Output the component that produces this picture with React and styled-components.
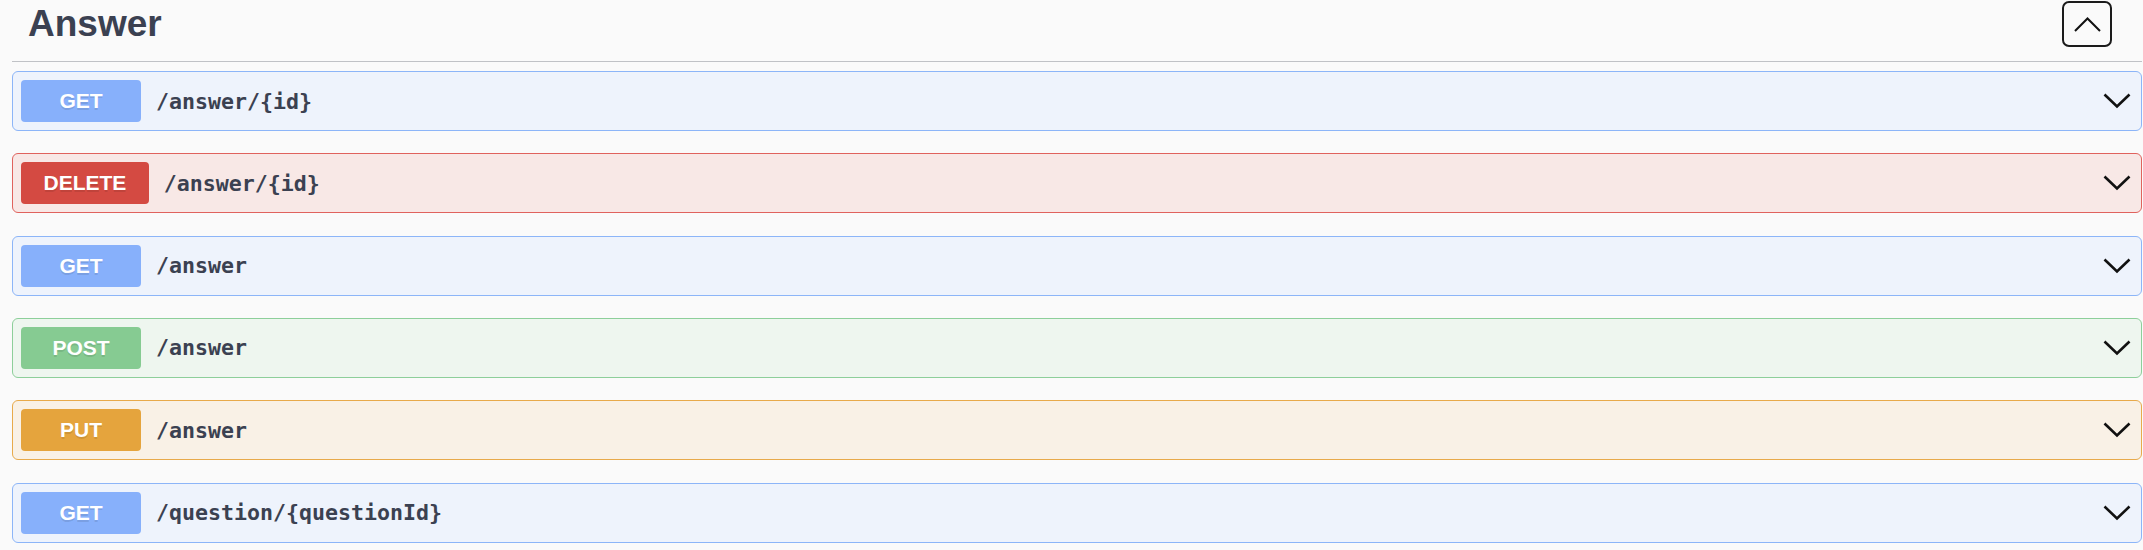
import React from "react";
import styled, { createGlobalStyle } from "styled-components";

const GlobalStyle = createGlobalStyle`
  html, body {
    margin: 0;
    padding: 0;
    background: #fafafa;
    font-family: "Liberation Sans", Arial, sans-serif;
  }
`;

const METHODS = {
  GET: { badge: "#87b0fb", bg: "#eef3fc", border: "#8cb5f8" },
  DELETE: { badge: "#d44a42", bg: "#f8e8e6", border: "#e0625d" },
  POST: { badge: "#86cb92", bg: "#eef6ef", border: "#8dcf9a" },
  PUT: { badge: "#e5a43d", bg: "#f9f1e6", border: "#e8aa4b" },
};

const Section = styled.section`
  padding: 0 1px 0 12px;
`;

const TagHeader = styled.div`
  display: flex;
  align-items: center;
  padding: 1px 30px 14px 16px;
  border-bottom: 1px solid rgba(59, 65, 81, 0.3);
  margin-bottom: 9px;
`;

const TagTitle = styled.h3`
  flex: 1;
  margin: 0;
  font-family: "Liberation Sans", Arial, sans-serif;
  font-size: 37px;
  font-weight: 700;
  color: #3b4151;
  line-height: 1.15;
`;

const CollapseButton = styled.button`
  width: 50px;
  height: 46px;
  box-sizing: border-box;
  border: 2px solid #1b1b1b;
  border-radius: 7px;
  background: transparent;
  padding: 0;
  display: flex;
  align-items: center;
  justify-content: center;
  cursor: pointer;
`;

const OpList = styled.div`
  display: flex;
  flex-direction: column;
  gap: 22.33px;
`;

const OpBlock = styled.div`
  box-sizing: border-box;
  border: 1px solid ${(p) => METHODS[p.$method].border};
  background: ${(p) => METHODS[p.$method].bg};
  border-radius: 6px;
`;

const Summary = styled.div`
  display: flex;
  align-items: center;
  padding: 8px;
`;

const MethodBadge = styled.span`
  flex: none;
  box-sizing: border-box;
  min-width: 120px;
  height: 42px;
  padding: 0 22.5px;
  display: flex;
  align-items: center;
  justify-content: center;
  border-radius: 4px;
  background: ${(p) => METHODS[p.$method].badge};
  color: #fff;
  font-family: "Liberation Sans", Arial, sans-serif;
  font-size: 21px;
  font-weight: 700;
  text-shadow: 0 1.5px 0 rgba(0, 0, 0, 0.1);
`;

const PathText = styled.span`
  flex: 1;
  padding: 0 15px;
  font-family: "DejaVu Sans Mono", "Liberation Mono", monospace;
  font-size: 21.6px;
  font-weight: 700;
  color: #3b4151;
`;

const ArrowWrap = styled.span`
  display: flex;
  align-items: center;
  margin-right: 2px;
`;

const ChevronDown = () => (
  <svg width="28" height="16" viewBox="0 0 28 16">
    <polyline
      points="1.5,1.5 14,13.5 26.5,1.5"
      fill="none"
      stroke="#111"
      strokeWidth="2.6"
    />
  </svg>
);

const ChevronUp = () => (
  <svg width="27" height="15" viewBox="0 0 27 15">
    <polyline
      points="1,14 13.5,1.5 26,14"
      fill="none"
      stroke="#111"
      strokeWidth="2"
    />
  </svg>
);

const ops = [
  { method: "GET", path: "/answer/{id}" },
  { method: "DELETE", path: "/answer/{id}" },
  { method: "GET", path: "/answer" },
  { method: "POST", path: "/answer" },
  { method: "PUT", path: "/answer" },
  { method: "GET", path: "/question/{questionId}" },
];

export default function App() {
  return (
    <>
      <GlobalStyle />
      <Section>
        <TagHeader>
          <TagTitle>Answer</TagTitle>
          <CollapseButton aria-label="Collapse operation">
            <ChevronUp />
          </CollapseButton>
        </TagHeader>
        <OpList>
          {ops.map((op, i) => (
            <OpBlock key={i} $method={op.method}>
              <Summary>
                <MethodBadge $method={op.method}>{op.method}</MethodBadge>
                <PathText>{op.path}</PathText>
                <ArrowWrap>
                  <ChevronDown />
                </ArrowWrap>
              </Summary>
            </OpBlock>
          ))}
        </OpList>
      </Section>
    </>
  );
}
